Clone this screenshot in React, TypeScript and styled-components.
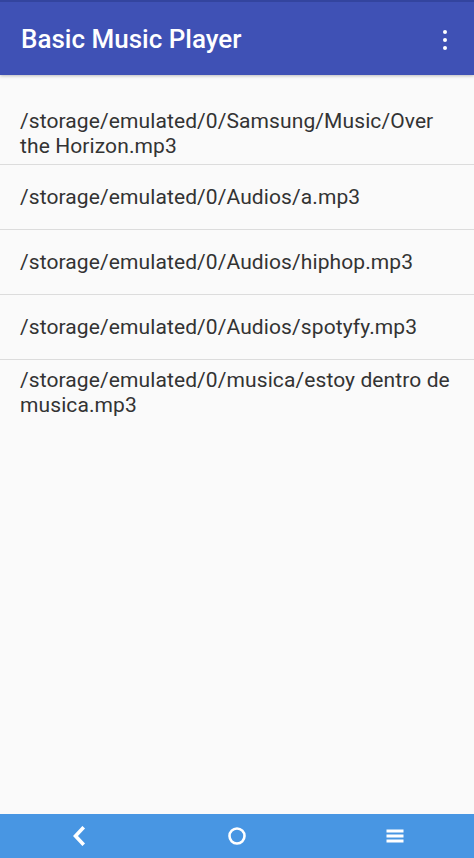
import React from "react";
import styled, { createGlobalStyle } from "styled-components";

const Global = createGlobalStyle`
  html, body { margin: 0; padding: 0; background: #fafafa; }
  body { font-family: Roboto, "Noto Sans", "Liberation Sans", sans-serif; }
  #root { height: 858px; }
`;

const Screen = styled.div`
  width: 474px;
  height: 858px;
  display: flex;
  flex-direction: column;
  background: #fafafa;
  overflow: hidden;
`;

const AppBar = styled.header`
  height: 75px;
  flex: none;
  display: flex;
  align-items: center;
  justify-content: space-between;
  padding: 0 19px 0 21px;
  box-sizing: border-box;
  background: #3f51b5;
  border-top: 2px solid #33449e;
  box-shadow: 0 1px 3px rgba(0, 0, 0, 0.25);
  position: relative;
  z-index: 1;
`;

const Title = styled.h1`
  margin: 0;
  font-family: Roboto, sans-serif;
  font-weight: 500;
  font-size: 26px;
  color: #ffffff;
`;

const MenuButton = styled.div`
  width: 20px;
  display: flex;
  flex-direction: column;
  align-items: center;
  gap: 4px;
  margin-top: 2px;
`;

const Dot = styled.span`
  width: 4px;
  height: 4px;
  border-radius: 50%;
  background: #ffffff;
`;

const List = styled.ul`
  list-style: none;
  margin: 25px 0 0;
  padding: 0;
  flex: 1;
`;

const Row = styled.li<{ $multi?: boolean }>`
  min-height: 65px;
  display: flex;
  align-items: center;
  padding: ${(p) => (p.$multi ? "3px 20px 0" : "0 20px")};
  box-sizing: border-box;
  font-family: Roboto, sans-serif;
  font-size: 21px;
  line-height: 25px;
  letter-spacing: 0.1px;
  color: #333333;
  border-bottom: 1px solid #dcdcdc;
  &:last-child {
    border-bottom: none;
  }
`;

const NavBar = styled.nav`
  height: 44px;
  flex: none;
  background: #4896e3;
  display: grid;
  grid-template-columns: 158px 158px 158px;
  align-items: center;
  justify-items: center;
`;

const songs = [
  { path: "/storage/emulated/0/Samsung/Music/Over the Horizon.mp3", multi: true },
  { path: "/storage/emulated/0/Audios/a.mp3" },
  { path: "/storage/emulated/0/Audios/hiphop.mp3" },
  { path: "/storage/emulated/0/Audios/spotyfy.mp3" },
  { path: "/storage/emulated/0/musica/estoy dentro de musica.mp3" },
];

export default function App() {
  return (
    <>
      <Global />
      <Screen>
        <AppBar>
          <Title>Basic Music Player</Title>
          <MenuButton>
            <Dot />
            <Dot />
            <Dot />
          </MenuButton>
        </AppBar>
        <List>
          {songs.map((s) => (
            <Row key={s.path} $multi={s.multi}>
              {s.path}
            </Row>
          ))}
        </List>
        <NavBar>
          <svg width="14" height="20" viewBox="0 0 14 20">
            <path d="M10.5 2.5 L3.5 10 L10.5 17.5" fill="none" stroke="#fff" strokeWidth="3.6" strokeLinecap="square" />
          </svg>
          <svg width="20" height="20" viewBox="0 0 20 20">
            <circle cx="10" cy="10" r="7.5" fill="none" stroke="#fff" strokeWidth="2.6" />
          </svg>
          <svg width="18" height="16" viewBox="0 0 18 16">
            <rect x="0.5" y="1.5" width="17" height="3" fill="#fff" />
            <rect x="0.5" y="6.5" width="17" height="3" fill="#fff" />
            <rect x="0.5" y="11.5" width="17" height="3" fill="#fff" />
          </svg>
        </NavBar>
      </Screen>
    </>
  );
}
